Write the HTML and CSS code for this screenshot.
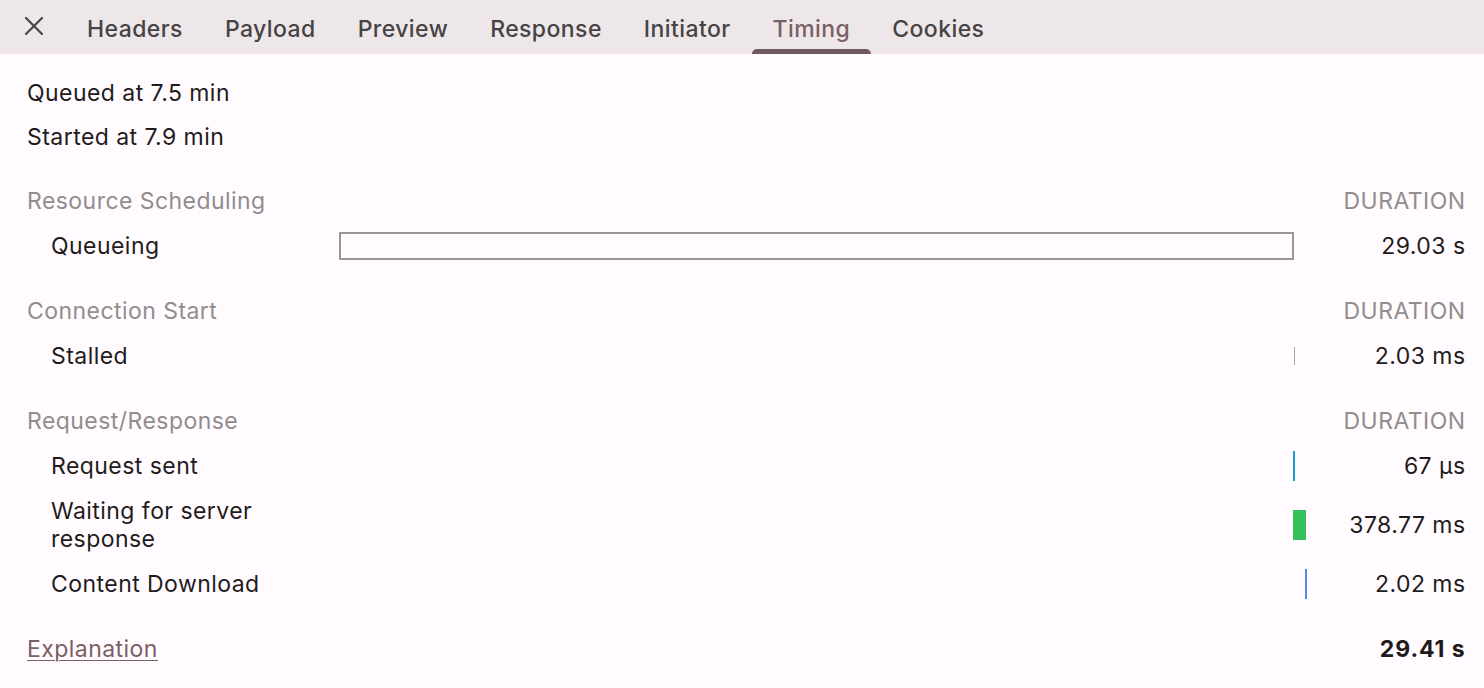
FILE: index.html
```html
<!DOCTYPE html>
<html lang="en">
<head>
<meta charset="utf-8">
<title>Timing</title>
<link rel="stylesheet" href="styles.css">
</head>
<body>
<div class="tabbar">
  <div class="close">
    <svg width="20" height="20" viewBox="0 0 20 20"><path d="M2 2 L18 18 M18 2 L2 18" stroke="#4a4546" stroke-width="2.2" stroke-linecap="round" fill="none"/></svg>
  </div>
  <div class="tab">Headers</div>
  <div class="tab">Payload</div>
  <div class="tab">Preview</div>
  <div class="tab">Response</div>
  <div class="tab">Initiator</div>
  <div class="tab active">Timing</div>
  <div class="tab">Cookies</div>
</div>
<main class="content">
  <div class="meta">Queued at 7.5 min</div>
  <div class="meta">Started at 7.9 min</div>

  <section class="section first">
    <div class="row head"><div class="label">Resource Scheduling</div><div class="track"></div><div class="dur">DURATION</div></div>
    <div class="row"><div class="label sub">Queueing</div><div class="track"><div class="bar queue" style="margin-left:0%;width:98.7%"></div></div><div class="dur">29.03 s</div></div>
  </section>

  <section class="section">
    <div class="row head"><div class="label">Connection Start</div><div class="track"></div><div class="dur">DURATION</div></div>
    <div class="row"><div class="label sub">Stalled</div><div class="track"><div class="bar stalled" style="margin-left:98.75%;width:1px"></div></div><div class="dur">2.03 ms</div></div>
  </section>

  <section class="section">
    <div class="row head"><div class="label">Request/Response</div><div class="track"></div><div class="dur">DURATION</div></div>
    <div class="row"><div class="label sub">Request sent</div><div class="track"><div class="bar sent" style="margin-left:98.65%;width:2px"></div></div><div class="dur">67 µs</div></div>
    <div class="row two"><div class="label sub">Waiting for server<br>response</div><div class="track"><div class="bar wait" style="margin-left:98.65%;width:1.35%"></div></div><div class="dur">378.77 ms</div></div>
    <div class="row"><div class="label sub">Content Download</div><div class="track"><div class="bar dl" style="margin-left:99.85%;width:2px"></div></div><div class="dur">2.02 ms</div></div>
  </section>

  <section class="section">
    <div class="row"><div class="label"><a class="link" href="#">Explanation</a></div><div class="track"></div><div class="dur total">29.41 s</div></div>
  </section>
</main>
</body>
</html>
```

FILE: styles.css
```css
html, body {
  margin: 0;
  padding: 0;
}
body {
  background: #fffbfe;
  font-family: Inter, "Noto Sans", sans-serif;
  font-size: 23px;
  letter-spacing: 0.45px;
  color: #1f1b1c;
  width: 1484px;
  height: 688px;
  overflow: hidden;
}
.tabbar {
  display: flex;
  align-items: stretch;
  height: 54px;
  background: #eee7e9;
  border-bottom: 1px solid #f6dfe2;
  box-sizing: border-box;
}
.close {
  width: 66px;
  box-sizing: border-box;
  padding-left: 24px;
  display: flex;
  align-items: center;
  padding-bottom: 1px;
}
.close svg { display: block; }
.tab {
  padding: 4px 21px 0 21px;
  display: flex;
  align-items: center;
  font-weight: 500;
  color: #474344;
  position: relative;
  letter-spacing: 0.42px;
}
.tab.active {
  color: #7b5f65;
}
.tab.active::after {
  content: "";
  position: absolute;
  left: 0;
  right: 0;
  bottom: -1px;
  height: 5px;
  background: #6f5a5e;
  border-radius: 5px 5px 0 0;
}
.content {
  padding: 17px 19px 0 27px;
}
.meta {
  height: 44px;
  line-height: 44px;
}
.section {
  margin-top: 20px;
}
.section.first {
  margin-top: 19px;
}
.row {
  display: flex;
  align-items: center;
  height: 45px;
  line-height: 28px;
}
.row.two {
  height: 73px;
}
.label {
  width: 312px;
  flex: none;
}
.label.sub {
  padding-left: 24px;
  box-sizing: border-box;
}
.track {
  flex: 1;
  display: flex;
  align-items: center;
  min-width: 0;
}
.dur {
  width: 159px;
  flex: none;
  text-align: right;
  margin-right: -0.5px;
}
.head .label, .head .dur {
  color: #928c8d;
}
.bar {
  flex: none;
}
.bar.queue {
  height: 28px;
  border: 2px solid #9a9596;
  box-sizing: border-box;
}
.bar.stalled {
  height: 18px;
  background: #a8a3a4;
}
.bar.sent {
  height: 30px;
  background: #1a9ccc;
}
.bar.wait {
  height: 30px;
  background: #34c15c;
}
.bar.dl {
  height: 30px;
  background: #4b8bf0;
}
.total {
  font-weight: 700;
  letter-spacing: 0.9px;
}
.link {
  color: #7a5f64;
  text-decoration: underline;
  text-underline-offset: 3px;
  text-decoration-thickness: 1px;
}
```
